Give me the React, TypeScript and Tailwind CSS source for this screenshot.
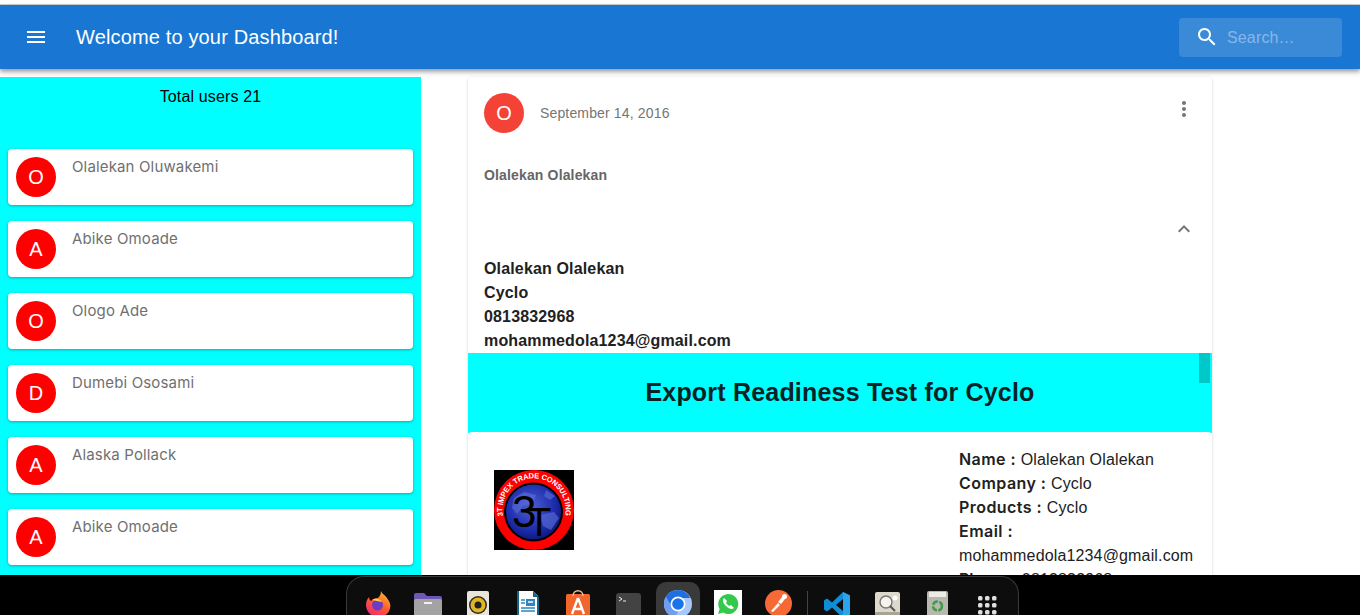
const users = [
  { initial: 'O', name: 'Olalekan Oluwakemi' },
  { initial: 'A', name: 'Abike Omoade' },
  { initial: 'O', name: 'Ologo Ade' },
  { initial: 'D', name: 'Dumebi Ososami' },
  { initial: 'A', name: 'Alaska Pollack' },
  { initial: 'A', name: 'Abike Omoade' },
];

const details = [
  { label: 'Name :', value: 'Olalekan Olalekan' },
  { label: 'Company :', value: 'Cyclo' },
  { label: 'Products :', value: 'Cyclo' },
  { label: 'Email :', value: '' },
];

const Logo = () => (
  <svg width="80" height="80" viewBox="0 0 80 80" className="block">
    <defs>
      <radialGradient id="globe" cx="45%" cy="40%" r="65%">
        <stop offset="0%" stopColor="#4f5fd6" />
        <stop offset="70%" stopColor="#1a2aa8" />
        <stop offset="100%" stopColor="#0a1470" />
      </radialGradient>
    </defs>
    <rect width="80" height="80" fill="#000" />
    <circle cx="40" cy="40" r="40" fill="#f00" />
    <circle cx="39.5" cy="42" r="29.5" fill="#000" />
    <circle cx="39.5" cy="42" r="27.5" fill="url(#globe)" />
    <path d="M20 28l10-6 12 3-3 8-10 3-6 8-5-6zM46 45l14-3 5 6-8 12-8-4zM52 20l9 6-5 4-6-4z" fill="#5d6fd8" opacity="0.6" />
    <text x="18" y="57" fontSize="44" fontFamily="'Liberation Sans', sans-serif" fill="#000">3</text>
    <text x="33" y="66" fontSize="40" fontFamily="'Liberation Sans', sans-serif" fill="#000">T</text>
    <path id="logoRing" d="M9 46A31.6 31.6 0 1 1 71 46" fill="none" />
    <text fontSize="7.5" fontWeight="700" fill="#fff" fontFamily="'Liberation Sans', sans-serif">
      <textPath href="#logoRing" textLength="111">3T IMPEX TRADE CONSULTING</textPath>
    </text>
  </svg>
);

const Firefox = () => (
  <svg width="26" height="26" viewBox="0 0 26 26" className="mt-[14px]">
    <defs>
      <linearGradient id="ff" x1="0.8" y1="0" x2="0.2" y2="1">
        <stop offset="0%" stopColor="#ffbd2e" />
        <stop offset="50%" stopColor="#ff5a2c" />
        <stop offset="100%" stopColor="#f0267a" />
      </linearGradient>
    </defs>
    <path d="M16 0c1 3 4 4 6 7 3 4 4 7 3 10-1 6-6 9-12 9S1 21 1 14c0-3 1-6 3-8 0 2 1 3 2 4 2-2 4-3 7-3 2-2 3-4 3-7z" fill="url(#ff)" />
    <circle cx="12.5" cy="14" r="5.5" fill="#6d3bc4" />
    <path d="M7 9c3-2 8-2 10 2-3-1-7-1-10-2z" fill="#ffcf4a" />
  </svg>
);

const Folder = () => (
  <svg width="28" height="26" viewBox="0 0 28 26" className="mt-[15px]">
    <path d="M0 3a2 2 0 0 1 2-2h8l3 3h13a2 2 0 0 1 2 2v5H0z" fill="#6e57b5" />
    <rect y="7" width="28" height="19" rx="2" fill="#a3a3a3" />
    <rect x="10" y="10" width="8" height="2" fill="#f0f0f0" />
  </svg>
);

const Speaker = () => (
  <svg width="22" height="26" viewBox="0 0 22 26" className="mt-[14px]">
    <rect width="22" height="26" rx="2" fill="#e9e5d8" />
    <circle cx="11" cy="14" r="9" fill="#2a2a2a" />
    <circle cx="11" cy="14" r="7.5" fill="#e2b71f" />
    <circle cx="11" cy="14" r="3.5" fill="#222" />
  </svg>
);

const Writer = () => (
  <svg width="22" height="26" viewBox="0 0 22 26" className="mt-[14px]">
    <path d="M1 0h15l5 5v21H1z" fill="#fff" />
    <path d="M0 0h2v26H0zM16 0l6 6h-6zM0 25h22v1H0zM20 6h2v20h-2z" fill="#13658a" />
    <rect x="9" y="8" width="9" height="7" fill="#2e86c1" />
    <rect x="11" y="10" width="5" height="2" fill="#bfe0f5" />
    <path d="M4 9h4M4 12h4M4 17h14M4 20h14" stroke="#2e86c1" strokeWidth="1.4" />
  </svg>
);

const Store = () => (
  <svg width="24" height="27" viewBox="0 0 24 27" className="mt-[13px]">
    <rect y="4" width="24" height="23" rx="1.5" fill="#f0662d" />
    <path d="M7 6c0-7 10-7 10 0" fill="none" stroke="#e8c09a" strokeWidth="1.4" />
    <path d="M12 8L6 24M12 8l6 16M8 19h8" stroke="#fff" strokeWidth="2.4" fill="none" />
  </svg>
);

const Terminal = () => (
  <svg width="25" height="24" viewBox="0 0 25 24" className="mt-[16px]">
    <rect width="25" height="24" rx="3" fill="#434343" />
    <path d="M3 4l3 2-3 2M7 8h3" stroke="#eee" strokeWidth="1" fill="none" />
  </svg>
);

const Chrome = () => (
  <div className="mt-[5px] w-[44px] h-[33px] rounded-t-[10px] bg-[#3a3a3a] flex justify-center pt-[8px]">
    <svg width="28" height="28" viewBox="0 0 28 28">
      <circle cx="14" cy="14" r="14" fill="#a8c7fa" />
      <path d="M14 0a14 14 0 0 0-12.1 7L7 16 14 8h12.1A14 14 0 0 0 14 0z" fill="#1f6fe0" />
      <path d="M1.9 7A14 14 0 0 0 11 27.7L15 20 7 16z" fill="#6f9ef0" />
      <circle cx="14" cy="14" r="7.5" fill="#fff" />
      <circle cx="14" cy="14" r="5.8" fill="#1a73e8" />
    </svg>
  </div>
);

const WhatsApp = () => (
  <div className="mt-[13px] w-[28px] h-[25px] bg-white flex justify-center pt-[3px]">
    <svg width="22" height="22" viewBox="0 0 22 22">
      <path d="M1 21l1.6-5A10 10 0 1 1 6 19.500z" fill="#34c94c" />
      <path d="M7 5c-2 2-1 5 2 8s6 4 8 2l-3-3-2 1-3-3 1-2z" fill="#fff" />
    </svg>
  </div>
);

const Postman = () => (
  <svg width="27" height="27" viewBox="0 0 27 27" className="mt-[13px]">
    <circle cx="13.500" cy="13.500" r="13.500" fill="#f76935" />
    <path d="M6 21l7-8 2 2-7 7z" fill="#fff" />
    <path d="M13 12l4-5 3 2-4 5z" fill="#fff" />
    <circle cx="19.500" cy="6.500" r="2.500" fill="#fff" />
  </svg>
);

const VsCode = () => (
  <svg width="26" height="26" viewBox="0 0 26 26" className="mt-[15px]">
    <path d="M19 0l7 3.500v19L19 26 8 15.500 3 19.500l-3-2v-9l3-2 5 4z" fill="#0e8ed8" />
    <path d="M19 7l-7 6 7 6z" fill="#0b0b0b" />
    <path d="M19 0l7 3.500v19L19 26z" fill="#2aa5ec" />
  </svg>
);

const Magnifier = () => (
  <svg width="25" height="26" viewBox="0 0 25 26" className="mt-[15px]">
    <rect width="25" height="26" rx="2" fill="#dcd8ca" />
    <rect y="20" width="25" height="6" rx="1" fill="#a8a393" />
    <circle cx="11" cy="10" r="6" fill="#f6f4ec" stroke="#777" strokeWidth="1.4" />
    <path d="M15 14l5 5" stroke="#555" strokeWidth="2" />
    <circle cx="20" cy="6" r="2.500" fill="#fff" />
  </svg>
);

const Trash = () => (
  <svg width="21" height="26" viewBox="0 0 21 26" className="mt-[14px]">
    <rect width="21" height="26" rx="2" fill="#b8b8b0" />
    <rect x="2" y="1" width="17" height="5" fill="#ecece6" />
    <circle cx="10.500" cy="15" r="4.500" fill="none" stroke="#3f9b47" strokeWidth="2.500" strokeDasharray="6 1.500" />
  </svg>
);

const Grid = () => (
  <svg width="19" height="19" viewBox="0 0 19 19" className="mt-[19px]" fill="#e0e0e0">
    {[0, 7, 14].map((y) =>
      [0, 7, 14].map((x) => <rect key={`${x}-${y}`} x={x} y={y} width="4.500" height="4.500" rx="1.500" />)
    )}
  </svg>
);

const dockLeft = [Firefox, Folder, Speaker, Writer, Store, Terminal, Chrome, WhatsApp, Postman];
const dockRight = [VsCode, Magnifier, Trash, Grid];

const App = () => {
  return (
    <div className="h-[615px] w-[1360px] flex flex-col overflow-hidden bg-white tracking-[0.15px] font-['Liberation_Sans',sans-serif]">
      <div className="h-[5px] bg-white border-b border-[#cfcfcf] shrink-0" />

      <header className="relative z-10 h-[64px] shrink-0 bg-[#1976d2] text-white flex items-center pl-[24px] pr-[18px] shadow-[0_2px_4px_rgba(0,0,0,0.3),0_4px_5px_rgba(0,0,0,0.14)]">
        <svg width="24" height="24" viewBox="0 0 24 24" fill="currentColor">
          <path d="M3 18h18v-2H3v2zm0-5h18v-2H3v2zm0-7v2h18V6H3z" />
        </svg>
        <h1 className="ml-[28px] text-[20px] leading-none">Welcome to your Dashboard!</h1>
        <div className="ml-auto w-[163px] h-[39px] rounded bg-white/15 flex items-center pl-[16px]">
          <svg width="24" height="24" viewBox="0 0 24 24" fill="currentColor">
            <path d="M15.5 14h-.79l-.28-.27C15.41 12.59 16 11.11 16 9.5 16 5.91 13.09 3 9.500 3S3 5.91 3 9.500 5.910 16 9.500 16c1.610 0 3.090-.59 4.230-1.570l.27.28v.79l5 4.990L20.490 19l-4.990-5zm-6 0C7.010 14 5 11.990 5 9.500S7.010 5 9.500 5 14 7.010 14 9.500 11.990 14 9.500 14z" />
          </svg>
          <span className="ml-[8px] mt-[1px] text-[16px] text-white/40">Search…</span>
        </div>
      </header>

      <main className="flex-1 min-h-0 flex items-start overflow-hidden pt-[8px]">
        <aside className="w-[421px] h-full shrink-0 bg-[#00ffff] px-[8px]">
          <p className="pt-[11px] text-center text-[16px] leading-[18px] text-black">Total users 21</p>
          <div className="mt-[43px] flex flex-col gap-[16px]">
            {users.map((user, i) => (
              <div key={i} className="h-[56px] bg-white rounded-[4px] shadow-[0_1px_3px_rgba(0,0,0,0.3)] flex items-start p-[8px]">
                <div className="w-[40px] h-[40px] rounded-full bg-[#ff0000] text-white text-[20px] flex items-center justify-center shrink-0">
                  {user.initial}
                </div>
                <span className="ml-[16px] -mt-[1px] text-[15px] leading-[22px] text-[#707070] font-['Inter',sans-serif]">
                  {user.name}
                </span>
              </div>
            ))}
          </div>
        </aside>

        <section className="ml-[47px] w-[744px] shrink-0 bg-white rounded-[4px] shadow-[0_1px_3px_rgba(0,0,0,0.18)]">
          <div className="flex items-center px-[16px] pt-[16px]">
            <div className="w-[40px] h-[40px] rounded-full bg-[#f44336] text-white text-[20px] flex items-center justify-center">O</div>
            <span className="ml-[16px] text-[14px] text-[#757575]">September 14, 2016</span>
            <svg width="24" height="24" viewBox="0 0 24 24" fill="#757575" className="ml-auto -mt-[8px]">
              <path d="M12 8c1.100 0 2-.9 2-2s-.9-2-2-2-2 .9-2 2 .9 2 2 2zm0 2c-1.100 0-2 .9-2 2s.9 2 2 2 2-.9 2-2-.9-2-2-2zm0 6c-1.100 0-2 .9-2 2s.9 2 2 2 2-.9 2-2-.9-2-2-2z" />
            </svg>
          </div>
          <p className="mt-[34px] pl-[16px] text-[14px] leading-[16px] font-bold text-[#666666]">Olalekan Olalekan</p>
          <div className="mt-[34px] flex justify-end pr-[16px]">
            <svg width="24" height="24" viewBox="0 0 24 24" fill="#757575">
              <path d="M12 8l-6 6 1.410 1.410L12 10.830l4.590 4.580L18 14z" />
            </svg>
          </div>
          <div className="mt-[16px] pl-[16px] text-[16px] leading-[24px] font-bold text-[#212121]">
            <p>Olalekan Olalekan</p>
            <p>Cyclo</p>
            <p>0813832968</p>
            <p>mohammedola1234@gmail.com</p>
          </div>
          <div className="relative h-[80px] bg-[#00ffff] flex items-center justify-center">
            <h2 className="text-[25px] font-bold tracking-[0.2px] text-[#0a2226]">Export Readiness Test for Cyclo</h2>
            <div className="absolute top-0 right-[2px] w-[11px] h-[30px] bg-[#00c8c8]" />
          </div>
          <div className="-mt-[1px] relative bg-white rounded-t-[4px] flex pt-[15px] pl-[26px]">
            <div className="pt-[23px]">
              <Logo />
            </div>
            <div className="ml-[385px] pt-[1px] text-[16px] leading-[24px] text-[#212121]">
              {details.map((row) => (
                <p key={row.label}>
                  <b className="font-semibold leading-none tracking-[0.45px] font-['Inter',sans-serif]">{row.label}</b> {row.value}
                </p>
              ))}
              <p>mohammedola1234@gmail.com</p>
              <p>
                <b className="font-semibold leading-none tracking-normal font-['Inter',sans-serif]">Phone :</b> 0813832968
              </p>
            </div>
          </div>
        </section>
      </main>

      <footer className="h-[40px] shrink-0 bg-black pl-[346px]">
        <div className="w-[673px] h-[40px] mt-[1px] rounded-t-[18px] bg-[#0d0d0d] border border-b-0 border-[#3a3a3a] overflow-hidden flex items-start pl-[6px]">
          {dockLeft.map((Icon, i) => (
            <div key={i} className="w-[50px] flex justify-center">
              <Icon />
            </div>
          ))}
          <div className="ml-[4px] mr-[4px] mt-[14px] w-px h-[25px] bg-[#444]" />
          {dockRight.map((Icon, i) => (
            <div key={i} className="w-[50px] flex justify-center">
              <Icon />
            </div>
          ))}
        </div>
      </footer>
    </div>
  );
};

export default App;
